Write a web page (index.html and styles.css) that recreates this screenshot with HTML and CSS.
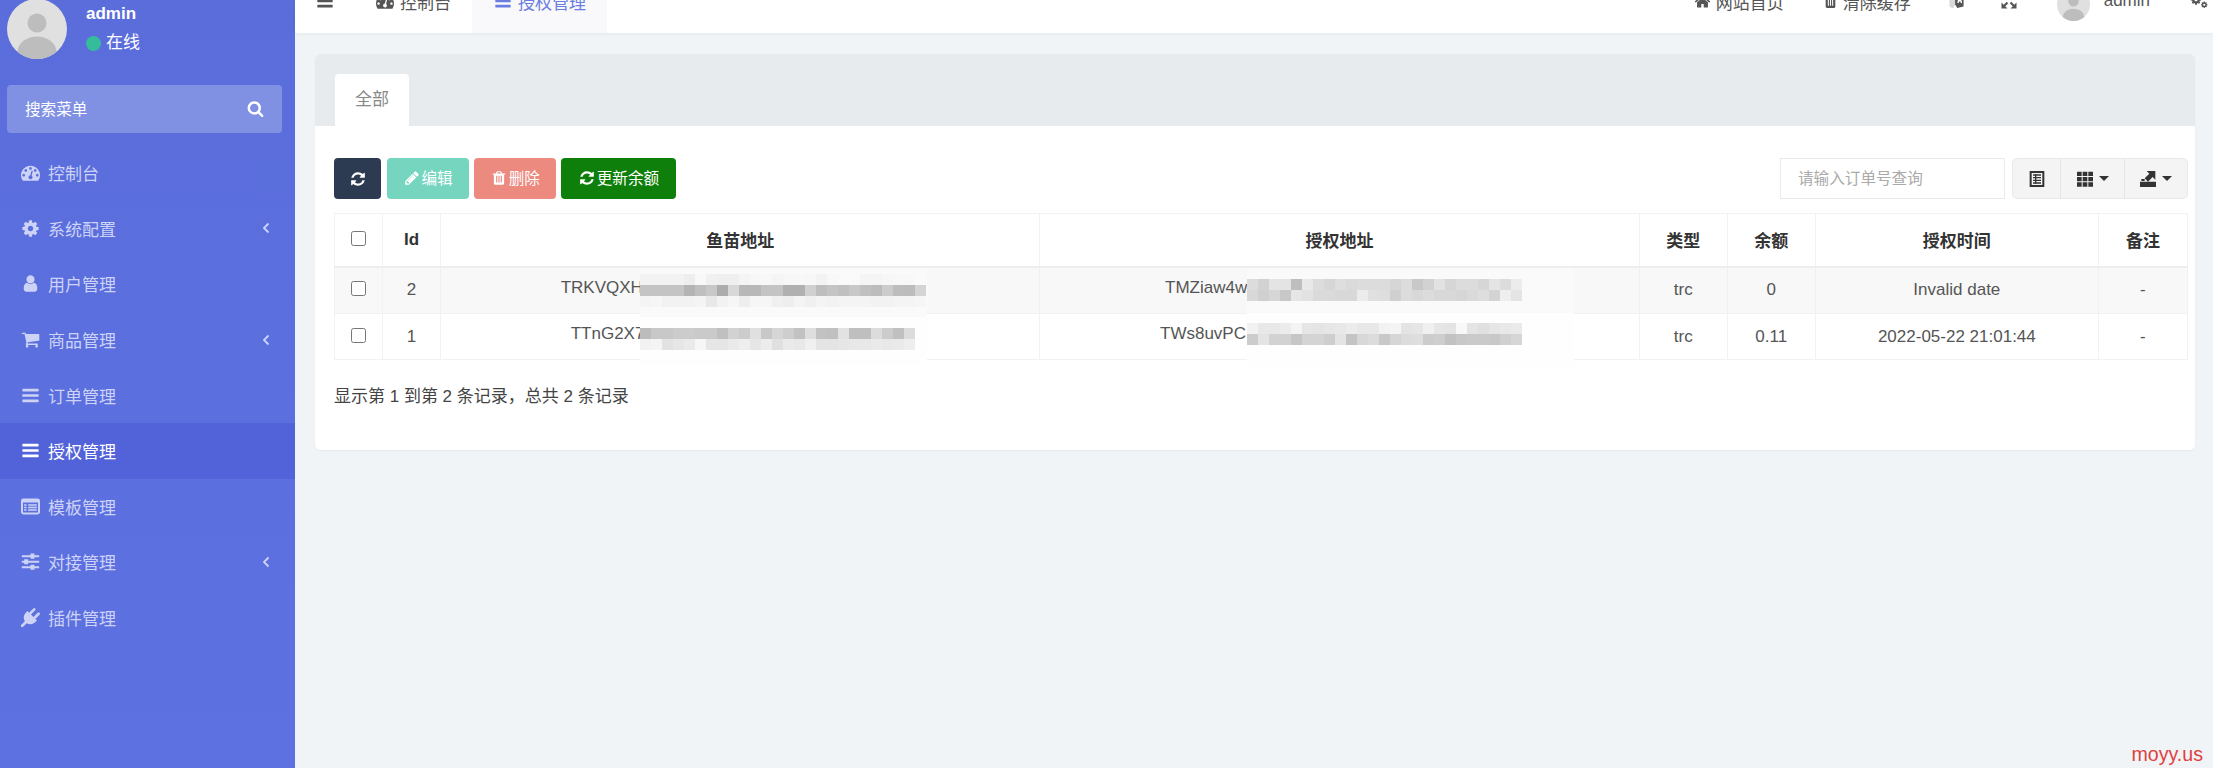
FILE: index.html
```html
<!DOCTYPE html>
<html lang="zh-CN">
<head>
<meta charset="utf-8">
<title>授权管理</title>
<link rel="stylesheet" href="styles.css">
</head>
<body>
<svg class="defs" width="0" height="0" aria-hidden="true">
  <defs>
    <symbol id="i-dash" viewBox="0 0 1792 1792"><path d="M384 1152q0-53-37.5-90.5t-90.5-37.5-90.5 37.5-37.5 90.5 37.5 90.5 90.5 37.5 90.5-37.5 37.5-90.5zm192-448q0-53-37.5-90.5t-90.5-37.5-90.5 37.5-37.5 90.5 37.5 90.5 90.5 37.5 90.5-37.5 37.5-90.5zm428 481l101-382q6-26-7.5-48.5t-38.5-29.5-48 6.5-30 39.5l-101 382q-60 5-107 43.5t-63 98.5q-20 77 20 146t117 89 146-20 89-117q16-60-6-117t-72-91zm660-33q0-53-37.5-90.5t-90.5-37.5-90.5 37.5-37.5 90.5 37.5 90.5 90.5 37.5 90.5-37.5 37.5-90.5zm-640-640q0-53-37.5-90.5t-90.5-37.5-90.5 37.5-37.5 90.5 37.5 90.5 90.5 37.5 90.5-37.5 37.5-90.5zm448 192q0-53-37.5-90.5t-90.5-37.5-90.5 37.5-37.5 90.5 37.5 90.5 90.5 37.5 90.5-37.5 37.5-90.5zm320 448q0 261-141 483-19 29-54 29h-1402q-35 0-54-29-141-221-141-483 0-182 71-348t191-286 286-191 348-71 348 71 286 191 191 286 71 348z"/></symbol>
    <symbol id="i-cog" viewBox="0 0 1792 1792"><path d="M1152 896q0-106-75-181t-181-75-181 75-75 181 75 181 181 75 181-75 75-181zm512-109v222q0 12-8 23t-20 13l-185 28q-19 54-39 91 35 50 107 138 10 12 10 25t-9 23q-27 37-99 108t-94 71q-12 0-26-9l-138-108q-44 23-91 38-16 136-29 186-7 28-36 28h-222q-14 0-24.5-8.5t-11.5-21.5l-28-184q-49-16-90-37l-141 107q-10 9-25 9-14 0-25-11-126-114-165-168-7-10-7-23 0-12 8-23 15-21 51-66.5t54-70.5q-27-50-41-99l-183-27q-13-2-21-12.5t-8-23.5v-222q0-12 8-23t19-13l186-28q14-46 39-92-40-57-107-138-10-12-10-24 0-10 9-23 26-36 98.5-107.5t94.5-71.5q13 0 26 10l138 107q44-23 91-38 16-136 29-186 7-28 36-28h222q14 0 24.5 8.5t11.5 21.5l28 184q49 16 90 37l142-107q9-9 24-9 13 0 25 10 129 119 165 170 7 8 7 22 0 12-8 23-15 21-51 66.5t-54 70.5q26 50 41 98l183 28q13 2 21 12.5t8 23.5z"/></symbol>
    <symbol id="i-cogs" viewBox="0 0 24 24"><use href="#i-cog" x="0" y="2" width="16" height="16"/><use href="#i-cog" x="14" y="12" width="10" height="10"/></symbol>
    <symbol id="i-user" viewBox="0 0 1792 1792"><path d="M1536 1399q0 109-62.5 187t-150.5 78h-854q-88 0-150.5-78t-62.5-187q0-85 8.5-160.5t31.5-152 58.5-131 94-89 134.5-34.5q131 128 313 128t313-128q76 0 134.5 34.5t94 89 58.5 131 31.5 152 8.5 160.5zm-256-887q0 159-112.5 271.5t-271.5 112.5-271.5-112.5-112.5-271.5 112.5-271.5 271.5-112.5 271.5 112.5 112.5 271.5z"/></symbol>
    <symbol id="i-cart" viewBox="0 0 1792 1792"><path d="M704 1536q0 52-38 90t-90 38-90-38-38-90 38-90 90-38 90 38 38 90zm896 0q0 52-38 90t-90 38-90-38-38-90 38-90 90-38 90 38 38 90zm128-1088v512q0 24-16.5 42.5t-40.5 21.5l-1044 122q13 60 13 70 0 16-24 64h920q26 0 45 19t19 45-19 45-45 19h-1024q-26 0-45-19t-19-45q0-11 8-31.5t16-36 21.5-40 15.5-29.5l-177-823h-204q-26 0-45-19t-19-45 19-45 45-19h256q16 0 28.5 6.5t19.5 15.5 13 24.5 8 26 5.5 29.5 4.5 26h1201q26 0 45 19t19 45z"/></symbol>
    <symbol id="i-bars" viewBox="0 0 1792 1792"><path d="M1664 1344v128q0 26-19 45t-45 19h-1408q-26 0-45-19t-19-45v-128q0-26 19-45t45-19h1408q26 0 45 19t19 45zm0-512v128q0 26-19 45t-45 19h-1408q-26 0-45-19t-19-45v-128q0-26 19-45t45-19h1408q26 0 45 19t19 45zm0-512v128q0 26-19 45t-45 19h-1408q-26 0-45-19t-19-45v-128q0-26 19-45t45-19h1408q26 0 45 19t19 45z"/></symbol>
    <symbol id="i-listalt" viewBox="0 0 24 20"><path fill-rule="evenodd" d="M3 0h18a3 3 0 0 1 3 3v14a3 3 0 0 1-3 3H3a3 3 0 0 1-3-3V3a3 3 0 0 1 3-3zM2.500 5v12.500h19V5zM4 7h3v2H4zM9 7h11v2H9zM4 10.200h3v2H4zM9 10.200h11v2H9zM4 13.400h3v2H4zM9 13.400h11v2H9z"/></symbol>
    <symbol id="i-sliders" viewBox="0 0 24 24"><path d="M1 4h11V2h5v2h6v2.500h-6v2h-5v-2H1zM1 11h3V9h5v2h14v2.500H9v2H4v-2H1zM1 18h11v-2h5v2h6v2.500h-6v2h-5v-2H1z"/></symbol>
    <symbol id="i-plug" viewBox="0 0 1792 1792"><path d="M1755 453q37 38 37 90.5t-37 90.5l-401 400 150 150-160 160q-163 163-389.5 186.5t-411.5-100.5l-362 362h-181v-181l362-362q-124-185-100.5-411.5t186.5-389.500l160-160 150 150 400-401q38-37 91-37t90 37 37 90.500-37 90.500l-400 401 234 234 401-400q38-37 91-37t90 37z"/></symbol>
    <symbol id="i-search" viewBox="0 0 1792 1792"><path d="M1216 832q0-185-131.500-316.500t-316.500-131.500-316.500 131.500-131.500 316.500 131.500 316.500 316.500 131.500 316.500-131.500 131.500-316.500zm512 832q0 52-38 90t-90 38q-54 0-90-38l-343-342q-179 124-399 124-143 0-273.500-55.500t-225-150-150-225-55.500-273.500 55.500-273.500 150-225 225-150 273.500-55.500 273.500 55.500 225 150 150 225 55.500 273.500q0 220-124 399l343 343q37 37 37 90z"/></symbol>
    <symbol id="i-refresh" viewBox="0 0 1792 1792"><path d="M1639 1056q0 5-1 7-64 268-268 434.500t-478 166.500q-146 0-282.500-55t-243.500-157l-129 129q-19 19-45 19t-45-19-19-45v-448q0-26 19-45t45-19h448q26 0 45 19t19 45-19 45l-137 137q71 66 161 102t187 36q134 0 250-65t186-179q11-17 53-117 8-23 30-23h192q13 0 22.500 9.500t9.500 22.500zm25-800v448q0 26-19 45t-45 19h-448q-26 0-45-19t-19-45 19-45l138-138q-148-137-349-137-134 0-250 65t-186 179q-11 17-53 117-8 23-30 23h-199q-13 0-22.500-9.500t-9.500-22.500v-7q65-268 270-434.500t480-166.500q146 0 284 55.500t245 156.500l130-129q19-19 45-19t45 19 19 45z"/></symbol>
    <symbol id="i-pencil" viewBox="0 0 1792 1792"><path d="M491 1536l91-91-235-235-91 91v107h128v128h107zm523-928q0-22-22-22-10 0-17 7l-542 542q-7 7-7 17 0 22 22 22 10 0 17-7l542-542q7-7 7-17zm-54-192l416 416-832 832h-416v-416zm683 96q0 53-37 90l-166 166-416-416 166-165q36-38 90-38 53 0 91 38l235 234q37 39 37 91z"/></symbol>
    <symbol id="i-trash" viewBox="0 0 1792 1792"><path d="M704 1376v-704q0-14-9-23t-23-9h-64q-14 0-23 9t-9 23v704q0 14 9 23t23 9h64q14 0 23-9t9-23zm256 0v-704q0-14-9-23t-23-9h-64q-14 0-23 9t-9 23v704q0 14 9 23t23 9h64q14 0 23-9t9-23zm256 0v-704q0-14-9-23t-23-9h-64q-14 0-23 9t-9 23v704q0 14 9 23t23 9h64q14 0 23-9t9-23zm-544-992h448l-48-117q-7-9-17-11h-317q-10 2-17 11zm928 32v64q0 14-9 23t-23 9h-96v948q0 83-47 143.500t-113 60.500h-832q-66 0-113-58.500t-47-141.500v-952h-96q-14 0-23-9t-9-23v-64q0-14 9-23t23-9h309l70-167q15-37 54-63t79-26h320q40 0 79 26t54 63l70 167h309q14 0 23 9t9 23z"/></symbol>
    <symbol id="i-home" viewBox="0 0 1792 1792"><path d="M1472 992v480q0 26-19 45t-45 19h-384v-384h-256v384h-384q-26 0-45-19t-19-45v-480q0-1 .5-3t.5-3l575-474 575 474q1 2 1 6zm223-69l-62 74q-8 9-21 11h-3q-13 0-21-7l-692-577-692 577q-12 8-24 7-13-2-21-11l-62-74q-8-10-7-23.500t11-21.500l719-599q32-26 76-26t76 26l244 204v-195q0-14 9-23t23-9h192q14 0 23 9t9 23v408l219 182q10 8 11 21.500t-7 23.500z"/></symbol>
    <symbol id="i-expand" viewBox="0 0 24 24"><path d="M2 2h8l-3 3 4 4-2 2-4-4-3 3zM22 2v8l-3-3-4 4-2-2 4-4-3-3zM2 22v-8l3 3 4-4 2 2-4 4 3 3zM22 22h-8l3-3-4-4 2-2 4 4 3-3z"/></symbol>
    <symbol id="i-lang" viewBox="0 0 24 24"><path fill="#d8d8d8" d="M2 5l12-3 2 3-9 17-5-3z"/><path fill="#555" d="M10 3l12-1v17l-9 2-3-5z"/><path fill="#fff" d="M15 6h3l2 8h-2l-.5-2h-2l-.5 2h-2z"/></symbol>
    <symbol id="i-book" viewBox="0 0 24 24"><path fill-rule="evenodd" d="M1 0h22v24H1zM4 3v18h16V3zM6 5h12v2H6zM6 9h12v2H6zM6 13h12v2H6zM6 17h12v2H6z"/><path d="M9 5h2v14H9z"/></symbol>
    <symbol id="i-grid" viewBox="0 0 24 24"><path d="M0 1h7v6.500H0zM8.500 1h7v6.500h-7zM17 1h7v6.500h-7zM0 9h7v6.500H0zM8.500 9h7v6.500h-7zM17 9h7v6.500h-7zM0 17h7v6.500H0zM8.500 17h7v6.500h-7zM17 17h7v6.500h-7z"/></symbol>
    <symbol id="i-export" viewBox="0 0 24 24"><path d="M0 16h24v8H0zM10 0h13v13l-4-4-7 7-5-5 7-7z"/><path d="M2 12h5v3H2z"/></symbol>
    <symbol id="i-avatar" viewBox="0 0 60 60"><clipPath id="avatar-clip"><circle cx="30" cy="30" r="30"/></clipPath><g clip-path="url(#avatar-clip)"><rect width="60" height="60" fill="#e0e0e0"/><circle cx="30" cy="24" r="9.500" fill="#bdbdbd"/><ellipse cx="30" cy="53" rx="19.500" ry="15.500" fill="#bdbdbd"/></g></symbol>
  </defs>
</svg>

<div class="app">
  <aside class="sidebar">
    <div class="user-panel">
      <svg class="user-avatar"><use href="#i-avatar"/></svg>
      <div class="user-info">
        <div class="user-name">admin</div>
        <div class="user-state"><span class="dot"></span>在线</div>
      </div>
    </div>
    <div class="side-search">
      <span class="side-search-text">搜索菜单</span>
      <svg class="ico side-search-ico"><use href="#i-search"/></svg>
    </div>
    <ul class="menu">
      <li class="menu-item"><svg class="ico menu-ico"><use href="#i-dash"/></svg><span>控制台</span></li>
      <li class="menu-item"><svg class="ico menu-ico"><use href="#i-cog"/></svg><span>系统配置</span><svg class="angle" viewBox="0 0 8 12"><path d="M6.500 1.500 2 6l4.500 4.500"/></svg></li>
      <li class="menu-item"><svg class="ico menu-ico"><use href="#i-user"/></svg><span>用户管理</span></li>
      <li class="menu-item"><svg class="ico menu-ico"><use href="#i-cart"/></svg><span>商品管理</span><svg class="angle" viewBox="0 0 8 12"><path d="M6.500 1.500 2 6l4.500 4.500"/></svg></li>
      <li class="menu-item"><svg class="ico menu-ico"><use href="#i-bars"/></svg><span>订单管理</span></li>
      <li class="menu-item active"><svg class="ico menu-ico"><use href="#i-bars"/></svg><span>授权管理</span></li>
      <li class="menu-item"><svg class="ico menu-ico"><use href="#i-listalt"/></svg><span>模板管理</span></li>
      <li class="menu-item"><svg class="ico menu-ico"><use href="#i-sliders"/></svg><span>对接管理</span><svg class="angle" viewBox="0 0 8 12"><path d="M6.500 1.500 2 6l4.500 4.500"/></svg></li>
      <li class="menu-item"><svg class="ico menu-ico"><use href="#i-plug"/></svg><span>插件管理</span></li>
    </ul>
  </aside>

  <main class="main">
    <header class="topbar">
      <div class="topbar-row">
        <svg class="ico burger"><use href="#i-bars"/></svg>
        <div class="nav-tab"><svg class="ico nav-ico"><use href="#i-dash"/></svg><span>控制台</span></div>
        <div class="nav-tab current"><svg class="ico nav-ico"><use href="#i-bars"/></svg><span>授权管理</span></div>
        <div class="top-right">
          <div class="top-link"><svg class="ico top-ico"><use href="#i-home"/></svg><span>网站首页</span></div>
          <div class="top-link"><svg class="ico top-ico trash-ico"><use href="#i-trash"/></svg><span>清除缓存</span></div>
          <svg class="top-lang"><use href="#i-lang"/></svg>
          <svg class="ico top-expand"><use href="#i-expand"/></svg>
          <div class="top-user"><svg class="top-avatar"><use href="#i-avatar"/></svg><span>admin</span></div>
          <svg class="ico top-cogs"><use href="#i-cogs"/></svg>
        </div>
      </div>
    </header>

    <section class="content">
      <div class="card">
        <div class="card-tabs"><div class="card-tab">全部</div></div>
        <div class="card-body">
          <div class="toolbar">
            <button class="btn btn-dark"><svg class="ico btn-ico"><use href="#i-refresh"/></svg></button>
            <button class="btn btn-teal"><svg class="ico btn-ico"><use href="#i-pencil"/></svg>编辑</button>
            <button class="btn btn-red"><svg class="ico btn-ico"><use href="#i-trash"/></svg>删除</button>
            <button class="btn btn-green"><svg class="ico btn-ico"><use href="#i-refresh"/></svg>更新余额</button>
            <input class="search" type="text" placeholder="请输入订单号查询">
            <div class="tool-group">
              <div class="tool tool-a"><svg class="ico tool-ico"><use href="#i-book"/></svg></div>
              <div class="tool tool-b"><svg class="ico tool-ico"><use href="#i-grid"/></svg><span class="caret"></span></div>
              <div class="tool tool-c"><svg class="ico tool-ico"><use href="#i-export"/></svg><span class="caret"></span></div>
            </div>
          </div>
          <div class="table-wrap">
            <table class="grid">
              <colgroup>
                <col class="c-check"><col class="c-id"><col class="c-addr"><col class="c-addr"><col class="c-type"><col class="c-type"><col class="c-time"><col class="c-note">
              </colgroup>
              <thead>
                <tr>
                  <th><input class="check" type="checkbox"></th><th>Id</th><th>鱼苗地址</th><th>授权地址</th><th>类型</th><th>余额</th><th>授权时间</th><th>备注</th>
                </tr>
              </thead>
              <tbody>
                <tr class="row-odd">
                  <td><input class="check" type="checkbox"></td><td>2</td>
                  <td><span class="addr addr-359">TRKVQXH</span></td>
                  <td><span class="addr addr-349">TMZiaw4w</span></td>
                  <td>trc</td><td>0</td><td>Invalid date</td><td>-</td>
                </tr>
                <tr class="row-even">
                  <td><input class="check" type="checkbox"></td><td>1</td>
                  <td><span class="addr addr-339">TTnG2X7</span></td>
                  <td><span class="addr addr-359">TWs8uvPC</span></td>
                  <td>trc</td><td>0.11</td><td>2022-05-22 21:01:44</td><td>-</td>
                </tr>
              </tbody>
            </table>
            <svg id="redact" class="redact" viewBox="334 213 1854 160"></svg>
          </div>
          <div class="summary">显示第 1 到第 2 条记录，总共 2 条记录</div>
        </div>
      </div>
    </section>
  </main>
</div>
<div class="watermark">moyy.us</div>
<script src="script.js"></script>
</body>
</html>
```

FILE: styles.css
```css
* { box-sizing: border-box; }
html, body { margin: 0; height: 768px; overflow: hidden; }
body {
  font-family: "Liberation Sans", "Noto Sans CJK SC", sans-serif;
  font-size: 17px;
  color: #555;
  background: #f1f4f6;
}
.defs { position: absolute; }
.ico { fill: currentColor; display: block; flex: none; }
.app { display: flex; height: 768px; }

/* sidebar */
.sidebar {
  width: 295px;
  flex: none;
  background: linear-gradient(180deg, #5a6ddb, #5e71e1);
  color: #ccd3f7;
}
.user-panel { display: flex; height: 85px; padding-left: 7px; }
.user-avatar { width: 60px; height: 60px; margin-top: -1px; flex: none; }
.user-info { margin-left: 19px; color: #fff; }
.user-name { font-weight: 700; line-height: 20px; margin-top: 4px; }
.user-state { display: flex; align-items: center; line-height: 24px; margin-top: 7px; }
.dot { width: 15px; height: 15px; border-radius: 50%; background: #35bd9b; margin-right: 5px; }
.side-search {
  display: flex;
  justify-content: space-between;
  align-items: center;
  width: 275px;
  height: 48px;
  margin-left: 7px;
  padding: 0 18px;
  background: #8091e4;
  border-radius: 4px;
  color: #fff;
  font-size: 15.6px;
}
.side-search-text { margin-top: -3px; }
.side-search-ico { width: 17px; height: 17px; margin-top: -2px; }
.menu { list-style: none; margin: 12px 0 0; padding: 0; }
.menu-item { display: flex; align-items: center; height: 55.6px; padding-left: 21px; }
.menu-ico { width: 19px; height: 19px; margin-right: 8px; }
.menu-item.active { background: #5262d8; color: #fff; }
.angle { width: 8px; height: 12px; margin-left: auto; margin-right: 25px; fill: none; stroke: currentColor; stroke-width: 1.8; }

/* top bar */
.main { flex: 1; min-width: 0; display: flex; flex-direction: column; }
.topbar { height: 33px; background: #fff; overflow: hidden; flex: none; box-shadow: 0 1px 4px rgba(0, 0, 0, .05); position: relative; }
.topbar-row { display: flex; align-items: center; height: 68px; margin-top: -33px; color: #555; }
.burger { width: 18px; height: 18px; margin: 0 20px 0 21px; }
.nav-tab { display: flex; align-items: center; height: 100%; padding: 0 21px 0 22px; }
.nav-ico { width: 18px; height: 18px; margin-right: 6px; }
.nav-tab.current { background: #f9f9fb; color: #6a7de0; }
.top-right { display: flex; align-items: center; gap: 39px; margin-left: auto; padding-right: 4px; }
.top-link { display: flex; align-items: center; gap: 5px; }
.top-ico { width: 17px; height: 17px; }
.trash-ico { width: 15px; }
.top-lang { width: 17px; height: 17px; margin-left: -2px; }
.top-expand { width: 18px; height: 18px; margin-left: -4px; }
.top-user { display: flex; align-items: center; gap: 14px; }
.top-avatar { width: 33px; height: 33px; margin-top: 6px; }
.top-cogs { width: 20px; height: 18px; }

/* card */
.content { padding: 21px 18px 0 20px; }
.card { background: #fff; border-radius: 5px; overflow: hidden; box-shadow: 0 1px 2px rgba(0, 0, 0, .05); height: 396px; }
.card-tabs { height: 72px; padding: 20px 0 0 20px; background: #e8ebee; }
.card-tab {
  width: 74px;
  height: 52px;
  line-height: 52px;
  text-align: center;
  background: #fff;
  border-radius: 4px 4px 0 0;
  color: #888;
}
.card-body { padding: 32px 7px 0 19px; }
.toolbar { display: flex; align-items: stretch; height: 41px; }
.btn {
  display: inline-flex;
  align-items: center;
  justify-content: center;
  height: 41px;
  margin: 0 5px 0 0;
  padding: 0 16.5px 4px;
  border: 0;
  border-radius: 4px;
  color: #fff;
  font: inherit;
  font-size: 15.6px;
}
.btn-ico { width: 16px; height: 16px; margin-right: 2px; margin-top: 2px; }
.btn-dark { width: 47px; margin-right: 6px; background: #2c3b52; padding: 0; }
.btn-dark .btn-ico { margin: 0; }
.btn-teal { background: #75d5bf; }
.btn-red { background: #ec8a80; }
.btn-green { width: 115px; background: #0f7f0b; padding-left: 0; padding-right: 0; }
.search {
  width: 225px;
  height: 41px;
  margin: 0 7px 0 auto;
  padding: 0 17px;
  border: 1.5px solid #e8eaf0;
  font: inherit;
  font-size: 15.6px;
  background: #fff;
  outline: 0;
}
.search::placeholder { color: #aaa; opacity: 1; }
.tool-group { display: flex; width: 176px; background: #f4f4f4; border: 1px solid #e8e8e8; border-radius: 5px; color: #333; }
.tool { display: flex; align-items: center; justify-content: center; gap: 6px; }
.tool + .tool { border-left: 1px solid #e6e6e6; }
.tool-a { width: 47px; }
.tool-b { width: 64px; }
.tool-c { width: 63px; }
.tool-ico { width: 16px; height: 16px; }
.caret { width: 0; height: 0; border: 5px solid transparent; border-top: 5.5px solid #333; border-bottom: 0; }

/* table */
.table-wrap { position: relative; margin-top: 14px; width: 1854px; }
.grid { width: 1854px; table-layout: fixed; border-collapse: collapse; border: 1px solid #f2f2f2; }
.c-check { width: 48px; }
.c-id { width: 58px; }
.c-addr { width: 599px; }
.c-type { width: 88px; }
.c-time { width: 283px; }
.c-note { width: 89px; }
.grid th, .grid td { padding: 0; text-align: center; vertical-align: middle; border: 1px solid #f2f2f2; }
.grid th { height: 53px; color: #333; font-weight: 700; border-bottom: 2px solid #eeeeee; }
.row-odd td { height: 47px; background: #f8f8f8; }
.row-even td { height: 46px; }
.check { display: block; width: 15px; height: 15px; margin: -3px auto 0; }
.addr { display: inline-block; text-align: left; white-space: nowrap; overflow: hidden; }
.addr-359 { width: 359px; }
.addr-349 { width: 349px; }
.addr-339 { width: 339px; }
.redact { position: absolute; left: 0; top: 0; width: 1854px; height: 160px; pointer-events: none; }
.summary { margin-top: 25px; line-height: 24px; color: #444; }

.watermark { position: absolute; right: 10px; bottom: 2px; color: #e04040; font-size: 19.6px; line-height: 24px; }
```

FILE: script.js
```js
// Pixelated redaction blocks that hide the wallet addresses.
var blocks = [
  { x: 640, y: 268, w: 287, h: 49, bg: "#fafafa", rows: [
    [274, "f2 f2 f3 f2 ee f8 f0 ef ef f4 f7 f8 f5 f7 f8 f7 f3 f8 f9 f9 f5 f5 f7 f8 f8 fa"],
    [285, "c4 c4 c4 c4 b4 bf c8 ac d8 b8 b8 c4 c4 b0 b0 d0 be c4 c0 c8 c0 bc cc bd bc d4"],
    [296, "f4 f6 f2 f2 f2 f4 e8 f2 f6 ee f6 f6 f0 ee f4 f0 f4 f2 f4 f4 f4 f2 f2 f4 f4 f6"]
  ]},
  { x: 640, y: 317, w: 287, h: 48, bg: "#fefefe", rows: [
    [328, "bc c8 c8 cc cc ca ca c0 d2 cc e0 c8 d6 ce c2 de c2 c0 e2 bf bf dc cc c0 dc"],
    [339, "f2 f4 e2 e6 ea f6 e6 e6 ea ee e6 ec e0 ea e8 f0 e4 e4 e6 e8 e8 ea e8 ea ee"]
  ]},
  { x: 1247, y: 268, w: 327, h: 45, bg: "#fafafa", rows: [
    [279, "dc d2 e4 e4 be e8 dc d6 de da dc dc dc d6 dc c8 d2 e2 d6 dc dc d6 e4 dc ec"],
    [290, "d8 d0 d6 c8 e6 e2 da da d8 d8 ec e0 de d0 dc d8 dc d8 d8 d6 da de d4 ee e4"]
  ]},
  { x: 1247, y: 313, w: 327, h: 54, bg: "#fefefe", rows: [
    [323, "f2 e8 e8 ec f4 e6 e4 e6 e8 ec e8 e8 f2 f4 e4 e6 f0 e6 e4 f8 e4 e0 e6 e8 ea"],
    [334, "cc e4 d2 d2 c6 d4 d4 ce e4 c4 d8 dc c8 d6 dc de cc ce c2 c8 ca ca c8 d0 d6"]
  ]}
];

var NS = "http://www.w3.org/2000/svg";
var svg = document.getElementById("redact");

function rect(x, y, w, h, fill) {
  var r = document.createElementNS(NS, "rect");
  r.setAttribute("x", x);
  r.setAttribute("y", y);
  r.setAttribute("width", w);
  r.setAttribute("height", h);
  r.setAttribute("fill", fill);
  svg.appendChild(r);
}

blocks.forEach(function (b) {
  rect(b.x, b.y, b.w, b.h, b.bg);
  b.rows.forEach(function (row) {
    row[1].split(" ").forEach(function (g, i) {
      rect(b.x + i * 11, row[0], 11, 11, "#" + g + g + g);
    });
  });
});
```
